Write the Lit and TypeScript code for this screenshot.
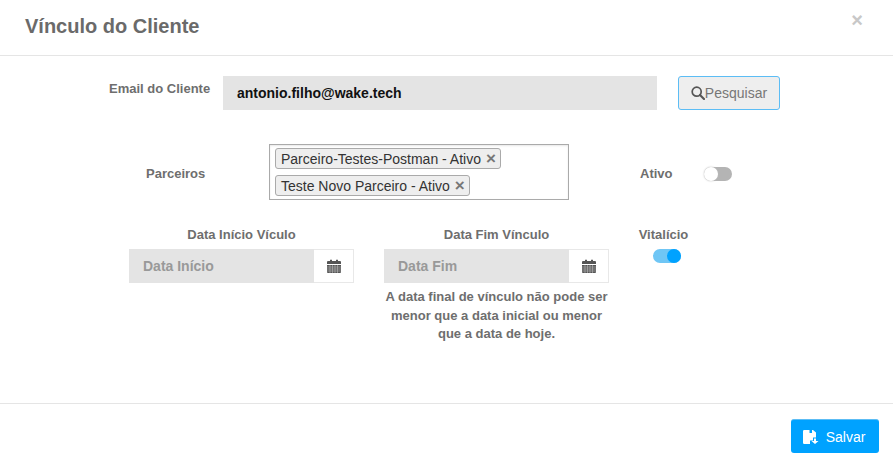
import { LitElement, html, css } from "lit";
import { customElement } from "lit/decorators.js";

const calendarIcon = html`<svg class="cal" viewBox="0 0 14 14" width="14" height="14">
  <path fill="#555" d="M1 2h2V.8h2V2h4V.8h2V2h2a1 1 0 0 1 1 1v2H0V3a1 1 0 0 1 1-1z" />
  <path fill="#555" d="M0 6h14v7a1 1 0 0 1-1 1H1a1 1 0 0 1-1-1z" />
  <path stroke="#bbb" stroke-width=".6" d="M0 8h14M0 10h14M0 12h14M3 6v8M5.5 6v8M8 6v8M10.5 6v8" />
</svg>`;

@customElement("app-root")
export class AppRoot extends LitElement {
  static styles = css`
    :host {
      display: block;
      width: 893px;
      height: 462px;
      background: #fff;
      overflow: hidden;
      font-family: "Liberation Sans", Arial, sans-serif;
      color: #666;
    }

    .header {
      height: 55px;
      box-sizing: content-box;
      border-bottom: 1px solid #e5e5e5;
      display: flex;
      justify-content: space-between;
      padding: 0 30px 0 25px;
    }
    .title {
      margin: 14px 0 0;
      font-size: 20px;
      line-height: 24px;
      font-weight: 700;
      color: #6a6a6a;
    }
    .close {
      margin-top: 10px;
      font-size: 20px;
      line-height: 20px;
      font-weight: 700;
      color: #c8c8c8;
    }

    .body {
      height: 348px;
      padding-top: 20px;
      box-sizing: border-box;
      border-bottom: 1px solid #e5e5e5;
    }
    .row {
      display: flex;
    }
    .label {
      font-size: 13px;
      font-weight: 700;
      color: #6e6e6e;
    }

    .row-email {
      margin-left: 109px;
    }
    .row-email .label {
      width: 114px;
      line-height: 26px;
    }
    .email {
      width: 434px;
      height: 34px;
      padding-left: 14px;
      box-sizing: border-box;
      background: #e4e4e4;
      font-size: 14px;
      line-height: 34px;
      font-weight: 700;
      color: #111;
    }
    .search {
      margin-left: 21px;
      width: 102px;
      height: 34px;
      box-sizing: border-box;
      padding: 0;
      display: flex;
      align-items: center;
      justify-content: center;
      border: 1px solid #5cbdf5;
      border-radius: 3px;
      background: #eee;
      font-family: inherit;
      font-size: 14px;
      color: #777;
    }

    .row-partners {
      margin: 34px 0 0 146px;
      align-items: center;
    }
    .row-partners .label {
      padding-top: 2px;
    }
    .row-partners .label:first-child {
      width: 123px;
    }
    .select {
      width: 300px;
      height: 56px;
      box-sizing: border-box;
      border: 1px solid #aaa;
      padding: 3px 5px;
      display: flex;
      flex-direction: column;
      align-items: flex-start;
      gap: 6px;
      box-shadow: inset 0 1px 2px #e8e8e8;
    }
    .tag {
      height: 21px;
      box-sizing: border-box;
      padding: 0 4px 0 5px;
      display: flex;
      align-items: center;
      gap: 5px;
      border: 1px solid #aaa;
      border-radius: 3px;
      background: #eee;
      font-size: 14px;
      color: #333;
    }
    .tag b {
      font-size: 17px;
      color: #777;
    }
    .active-label {
      margin-left: 71px;
      width: 64px;
    }

    .switch {
      display: block;
      position: relative;
      width: 28px;
      height: 14px;
      border-radius: 7px;
    }
    .switch i {
      position: absolute;
      top: 0;
      width: 14px;
      height: 14px;
      border-radius: 50%;
    }
    .off {
      margin-top: 4px;
      background: #b4b4b4;
    }
    .off i {
      left: 0;
      background: #fff;
      box-shadow: 0 0 2px #bbb;
    }
    .on {
      margin-left: 7px;
      background: #6fc6f5;
    }
    .on i {
      right: 0;
      background: #00a2ff;
    }

    .row-dates {
      margin: 27px 0 0 129px;
    }
    .date-col {
      width: 225px;
      margin-right: 30px;
      text-align: center;
    }
    .date-col .label,
    .life .label {
      line-height: 15px;
      margin-bottom: 7px;
    }
    .date {
      display: flex;
      height: 34px;
    }
    .date span {
      flex: 1;
      padding-left: 14px;
      background: #e4e4e4;
      text-align: left;
      font-size: 14px;
      line-height: 34px;
      font-weight: 700;
      color: #999;
    }
    .addon {
      width: 40px;
      box-sizing: border-box;
      border: 1px solid #e8e8e8;
      border-left: 0;
      display: flex;
      align-items: center;
      justify-content: center;
    }
    .hint {
      margin-top: 5px;
      font-size: 13px;
      line-height: 18.5px;
      font-weight: 700;
      color: #6e6e6e;
    }
    .life {
      margin-left: -1px;
      width: 51px;
      display: flex;
      flex-direction: column;
      align-items: center;
    }

    .footer {
      display: flex;
      justify-content: flex-end;
      padding: 15px 14px 0 0;
    }
    .save {
      width: 88px;
      height: 34px;
      padding: 0 2px 0 0;
      border: 0;
      border-top: 1px solid #5cbdf5;
      border-radius: 3px;
      background: #00a2ff;
      display: flex;
      align-items: center;
      justify-content: center;
      gap: 7px;
      font-family: inherit;
      font-size: 14px;
      color: #fff;
    }
  `;

  render() {
    return html`
      <div class="header">
        <h4 class="title">Vínculo do Cliente</h4>
        <span class="close">×</span>
      </div>
      <div class="body">
        <div class="row row-email">
          <div class="label">Email do Cliente</div>
          <div class="email">antonio.filho@wake.tech</div>
          <button class="search">
            <svg viewBox="0 0 14 14" width="14" height="14">
              <circle cx="5.7" cy="5.7" r="4.5" fill="none" stroke="#555" stroke-width="1.7" />
              <path d="M9 9l4 4" stroke="#555" stroke-width="2.2" stroke-linecap="round" />
            </svg>Pesquisar
          </button>
        </div>
        <div class="row row-partners">
          <div class="label">Parceiros</div>
          <div class="select">
            <div class="tag">Parceiro-Testes-Postman - Ativo <b>×</b></div>
            <div class="tag">Teste Novo Parceiro - Ativo <b>×</b></div>
          </div>
          <div class="label active-label">Ativo</div>
          <span class="switch off"><i></i></span>
        </div>
        <div class="row row-dates">
          <div class="date-col">
            <div class="label">Data Início Vículo</div>
            <div class="date"><span>Data Início</span><div class="addon">${calendarIcon}</div></div>
          </div>
          <div class="date-col">
            <div class="label">Data Fim Vínculo</div>
            <div class="date"><span>Data Fim</span><div class="addon">${calendarIcon}</div></div>
            <div class="hint">A data final de vínculo não pode ser menor que a data inicial ou menor que a data de hoje.</div>
          </div>
          <div class="life">
            <div class="label">Vitalício</div>
            <span class="switch on"><i></i></span>
          </div>
        </div>
      </div>
      <div class="footer">
        <button class="save">
          <svg viewBox="0 0 16 14" width="16" height="14">
            <path fill="#fff" d="M0 1.200A1.200 1.200 0 0 1 1.200 0h8.800L13 2.500V7.500H10v3H7V14H1.200A1.200 1.200 0 0 1 0 12.800z" />
            <path fill="#00a2ff" d="M6.500 0h2.500v3H6.500z" />
            <path fill="#fff" d="M11 8.500h2v2.500h2.500L12 14l-3.500-3H11z" />
          </svg>Salvar
        </button>
      </div>
    `;
  }
}
